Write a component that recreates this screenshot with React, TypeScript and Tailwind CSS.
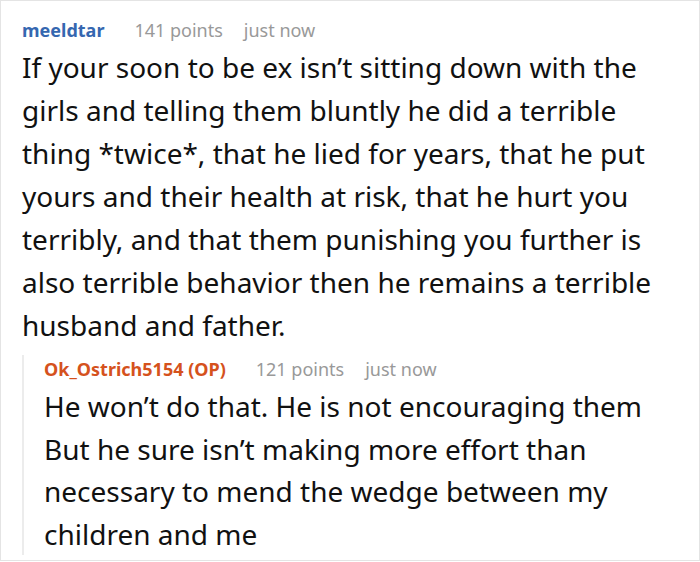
export default function App() {
  return (
    <div className="w-[700px] h-[562px] bg-white overflow-hidden font-['Noto_Sans',sans-serif]">
      <div className="h-[561px] border border-[#e4e4e4] pl-[21px] pr-[34px] pt-[15px]">
        <div className="flex items-baseline gap-[30px] text-[18px] leading-[28px]">
          <span className="font-bold text-[#3567b0]">meeldtar</span>
          <span className="text-[#999]">141 points</span>
          <span className="text-[#999] -ml-[9px]">just now</span>
        </div>
        <p className="mt-[2px] text-[28px] leading-[43px] text-[#111]">
          If your soon to be ex isn’t sitting down with the girls and telling them bluntly he did a terrible thing *twice*, that he lied for years, that he put yours and their health at risk, that he hurt you terribly, and that them punishing you further is also terrible behavior then he remains a terrible husband and father.
        </p>
        <div className="mt-[14px] border-l-2 border-[#ececec] pl-[20px]">
          <div className="flex items-baseline gap-[30px] text-[18px] leading-[28px] -mt-[6px]">
            <span className="font-bold text-[#d5521d]">Ok_Ostrich5154 (OP)</span>
            <span className="text-[#999]">121 points</span>
            <span className="text-[#999] -ml-[9px]">just now</span>
          </div>
          <p className="mt-[2px] text-[28px] leading-[42.5px] text-[#111]">
            He won’t do that. He is not encouraging them But he sure isn’t making more effort than necessary to mend the wedge between my children and me
          </p>
        </div>
      </div>
    </div>
  )
}
